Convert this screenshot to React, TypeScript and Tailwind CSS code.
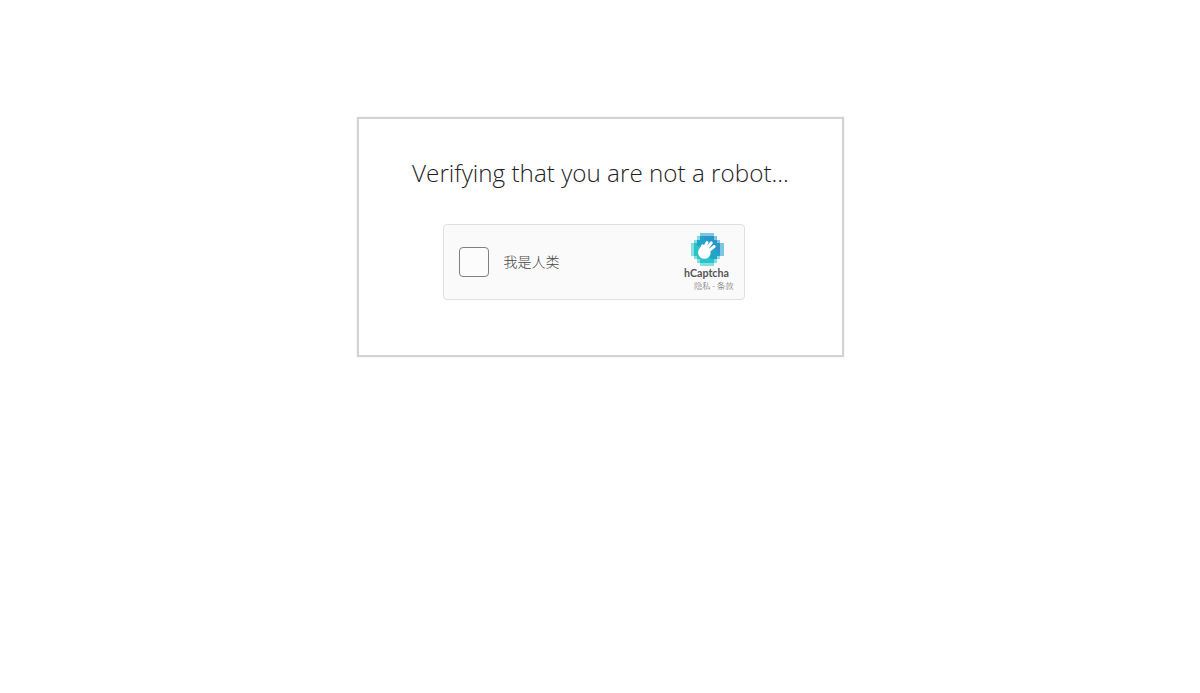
const cells: [number, number, string][] = [];
// hCaptcha mark: rows of blocks, blue at the top, teal at the bottom left
const rows: [number, number][] = [
  [3, 4],
  [2, 6],
  [1, 8],
  [0, 10],
  [0, 10],
  [0, 10],
  [0, 10],
  [1, 8],
  [2, 6],
  [3, 4],
];
const pick = (x: number, y: number) => {
  const edge = x === rows[y][0] || x === rows[y][0] + rows[y][1] - 1 || y === 0 || y === 9;
  const t = x - y;
  if (edge) return t > 1 ? "#7cc6e4" : "#84e0e0";
  if (t > 2) return "#2b97c9";
  if (t > -2) return "#22a3c8";
  return "#2cc3c8";
};
rows.forEach(([start, len], y) => {
  for (let x = start; x < start + len; x++) cells.push([x, y, pick(x, y)]);
});

function Logo() {
  return (
    <svg width="34" height="33" viewBox="0 0 10 10" shapeRendering="crispEdges">
      {cells.map(([x, y, fill]) => (
        <rect key={`${x}-${y}`} x={x} y={y} width="1" height="1" fill={fill} />
      ))}
      <g shapeRendering="auto" stroke="#fff" strokeWidth="0.9" strokeLinecap="round">
        <circle cx="4.2" cy="5.9" r="1.9" fill="#fff" stroke="none" />
        <line x1="3" y1="5.4" x2="3.7" y2="3.9" />
        <line x1="3.9" y1="5" x2="5" y2="2.9" />
        <line x1="4.7" y1="5" x2="6.3" y2="3" />
        <line x1="5.2" y1="5.6" x2="7.2" y2="4.1" />
      </g>
    </svg>
  );
}

export default function App() {
  return (
    <div className="flex h-[693px] justify-center bg-white pt-[117px] font-['Open_Sans','Noto_Sans_CJK_SC',sans-serif]">
      <div className="h-[240px] w-[487px] border-2 border-[#d3d3d3] pr-[85px] pl-[84px] shadow-[0_0_1px_#cccccc]">
        <h1 className="-mr-[42px] -ml-[40px] mt-[38px] text-center text-[24.25px] leading-[32px] font-light whitespace-nowrap text-[#1f1f1f]">
          Verifying that you are not a robot...
        </h1>
        <div className="mt-[35px] flex h-[76px] w-[302px] items-center rounded-[4px] border border-[#e0e0e0] bg-[#fafafa] pr-[10px] pl-[15px]">
          <div className="h-[30px] w-[30px] rounded-[4px] border border-[#808080] bg-[#fcfcfc]" />
          <span className="mb-[2px] ml-[15px] flex-1 font-['Noto_Sans_CJK_SC',sans-serif] text-[14px] font-light text-[#444]">
            我是人类
          </span>
          <div className="-mr-[1px] flex w-[56px] flex-col items-center">
            <Logo />
            <span className="mt-[1px] font-['Lato',sans-serif] text-[10.7px] leading-[12px] font-bold text-[#555]">
              hCaptcha
            </span>
            <span className="mt-[1px] mr-[1px] self-end font-['Noto_Sans_CJK_SC',sans-serif] text-[8.3px] leading-[11px] font-light text-[#606060]">
              隐私 - 条款
            </span>
          </div>
        </div>
      </div>
    </div>
  );
}
